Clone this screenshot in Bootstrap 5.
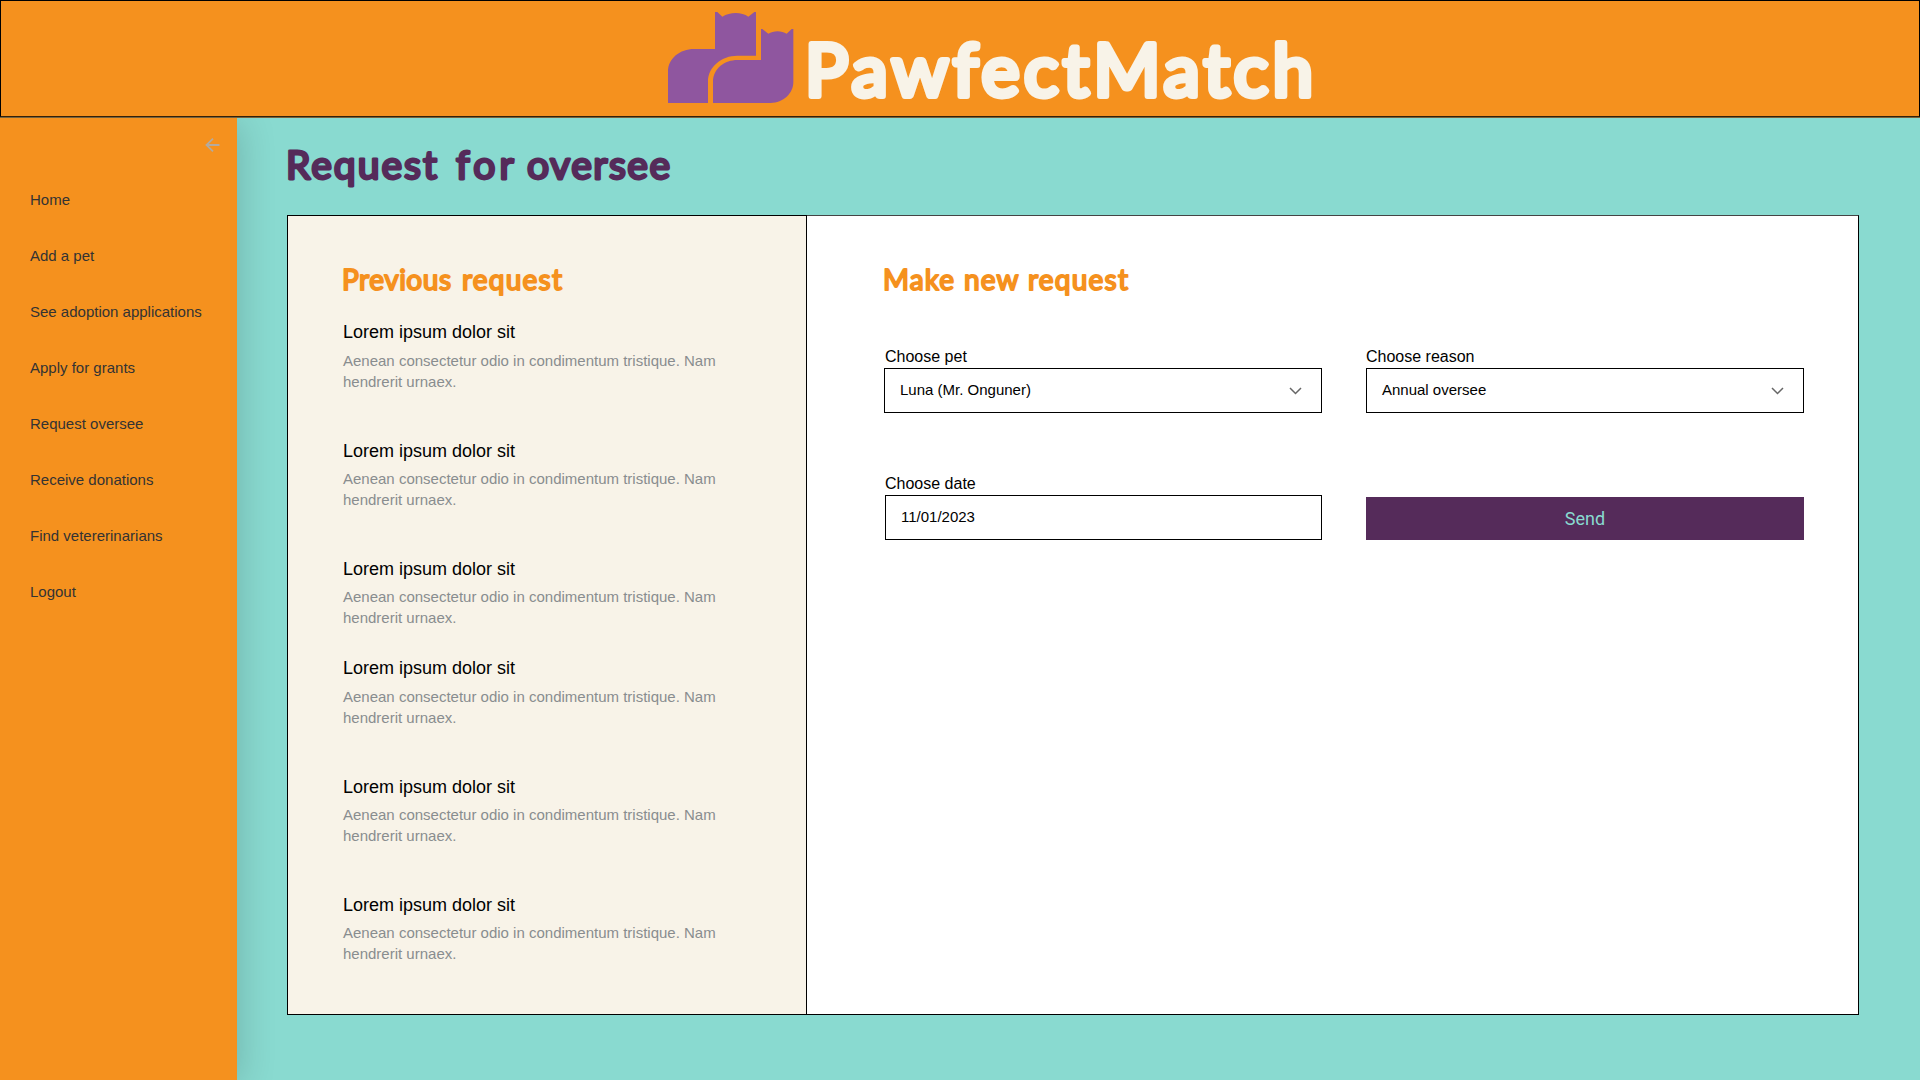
<!DOCTYPE html>
<html lang="en">
<head>
<meta charset="utf-8">
<title>PawfectMatch</title>
<meta name="viewport" content="width=device-width, initial-scale=1">
<link href="https://cdn.jsdelivr.net/npm/bootstrap@5.3.0/dist/css/bootstrap.min.css" rel="stylesheet">
<style>
body{font-family:"Liberation Sans",Arial,sans-serif;background:#fff;color:#000;overflow:hidden}
.page{height:1080px;background:#89dad0}
.topbar{height:117px;background:#f5911e;border:1px solid #000;border-bottom-color:#32200a;box-shadow:0 1px #77633c;margin-bottom:1px;z-index:2;padding-left:667px}
.cats{width:126px;height:92px;margin-top:10px;flex:none}
.hand{line-height:1;margin:0}
.hand svg{display:block;overflow:visible;font-family:Lato,sans-serif;font-weight:400;stroke-linejoin:round;stroke-linecap:round}
.brand svg{font-size:72px;fill:#f8f3e8;stroke:#f8f3e8;stroke-width:6px}
.side{width:237px;background:#f5911e;box-shadow:4px 4px 34px rgba(0,0,0,.16);padding:20px 0 0 30px;flex:none}
.side .back{padding-right:17px;height:34px}
.side .nav-link{padding:0;height:56px;line-height:56px;font-size:15px;color:#333}
.main{padding:0 61px 65px 50px}
.title{height:97px}
.title svg{font-size:39px;fill:#552b5a;stroke:#552b5a;stroke-width:2.8px}
.panel{height:800px}
.prev{width:520px;background:#f8f3e8;border:1px solid #000;padding:49px 55px 0;flex:none}
.make{background:#fff;border:1px solid #000;border-top-color:#444;border-left:0;padding:49px 54px 0 77px}
.sub{height:30px}
.sub svg{font-size:28px;fill:#f5911e;stroke:#f5911e;stroke-width:1.9px}
.items{margin-top:26px}
.item{height:118px}
.item.first{height:119px}
.item.tight{height:99px}
.item h3{font-size:18px;line-height:22px;font-weight:400;margin:0 0 6px}
.item.first h3{margin-bottom:7px}
.item p{font-size:15px;line-height:21px;color:#898d8f;margin:0;width:385px}
.fields{display:grid;grid-template-columns:438px 438px;column-gap:44px;row-gap:61px;margin-top:52px}
.fields label{display:block;font-size:16px;line-height:20px;height:21px;padding-left:1px}
.fields .col-b label{padding-left:0}
.fields .form-control{height:45px;border:1px solid #000;border-radius:0;font-size:15px;color:#000;padding:0 19px 0 15px}
.fields .date{width:437px}
.send{height:43px;border-radius:0;background:#552b5a;color:#89dad0;font-family:Roboto,sans-serif;font-size:18px;padding:0;border:0}
</style>
<script src="https://cdn.jsdelivr.net/npm/bootstrap@5.3.0/dist/js/bootstrap.bundle.min.js"></script>
</head>
<body>
<div class="page d-flex flex-column">
  <header class="topbar d-flex align-items-start position-relative">
    <svg class="cats" viewBox="54 33 378 276" fill="#8f569f"><path d="M54 309V215C54 175 90 147 132 147H195V36H202L217 50C240 35 275 35 295 50L313 36H318V167H262C215 167 174 200 174 245V309Z"/><path d="M189 309V245C189 205 225 180 262 180H333V87H337L355 101C370 91 395 91 410 101L425 87H430V247C430 280 400 309 362 309Z"/></svg>
    <h1 class="hand brand"><svg width="525" height="115"><text x="11" y="95" textLength="508">PawfectMatch</text></svg></h1>
  </header>
  <div class="d-flex flex-grow-1">
    <nav class="side d-flex flex-column">
      <div class="back d-flex justify-content-end"><svg width="15" height="14" viewBox="0 0 15 14" fill="none" stroke="#b3aaa0" stroke-width="1.8"><path d="M14.500 7H2M8 .7L1.500 7L8 13.300"/></svg></div>
      <div class="nav flex-column">
        <a class="nav-link" href="#">Home</a>
        <a class="nav-link" href="#">Add a pet</a>
        <a class="nav-link" href="#">See adoption applications</a>
        <a class="nav-link" href="#">Apply for grants</a>
        <a class="nav-link" href="#">Request oversee</a>
        <a class="nav-link" href="#">Receive donations</a>
        <a class="nav-link" href="#">Find vetererinarians</a>
        <a class="nav-link" href="#">Logout</a>
      </div>
    </nav>
    <main class="main flex-grow-1">
      <h2 class="hand title"><svg width="400" height="90"><text y="61"><tspan x="-1" textLength="151">Request</tspan> <tspan x="169" textLength="57">for</tspan> <tspan x="240" textLength="143">oversee</tspan></text></svg></h2>
      <div class="panel d-flex position-relative">
        <section class="prev">
          <h2 class="hand sub"><svg width="240" height="30"><text y="24.500"><tspan x="-1" textLength="109">Previous</tspan> <tspan x="119" textLength="100">request</tspan></text></svg></h2>
          <div class="items">
            <article class="item first"><h3>Lorem ipsum dolor sit</h3><p>Aenean consectetur odio in condimentum tristique. Nam hendrerit urnaex.</p></article>
            <article class="item"><h3>Lorem ipsum dolor sit</h3><p>Aenean consectetur odio in condimentum tristique. Nam hendrerit urnaex.</p></article>
            <article class="item tight"><h3>Lorem ipsum dolor sit</h3><p>Aenean consectetur odio in condimentum tristique. Nam hendrerit urnaex.</p></article>
            <article class="item first"><h3>Lorem ipsum dolor sit</h3><p>Aenean consectetur odio in condimentum tristique. Nam hendrerit urnaex.</p></article>
            <article class="item"><h3>Lorem ipsum dolor sit</h3><p>Aenean consectetur odio in condimentum tristique. Nam hendrerit urnaex.</p></article>
            <article class="item"><h3>Lorem ipsum dolor sit</h3><p>Aenean consectetur odio in condimentum tristique. Nam hendrerit urnaex.</p></article>
          </div>
        </section>
        <section class="make flex-grow-1">
          <h2 class="hand sub"><svg width="260" height="30"><text y="24.500"><tspan x="-1" textLength="71">Make</tspan> <tspan x="80" textLength="54">new</tspan> <tspan x="144" textLength="100">request</tspan></text></svg></h2>
          <form class="fields">
            <div><label>Choose pet</label><div class="form-control d-flex align-items-center justify-content-between"><span>Luna (Mr. Onguner)</span><svg width="13" height="8" viewBox="0 0 13 8" fill="none" stroke="#666" stroke-width="1.500"><path d="M1 1L6.500 6.500L12 1"/></svg></div></div>
            <div class="col-b"><label>Choose reason</label><div class="form-control d-flex align-items-center justify-content-between"><span>Annual oversee</span><svg width="13" height="8" viewBox="0 0 13 8" fill="none" stroke="#666" stroke-width="1.500"><path d="M1 1L6.500 6.500L12 1"/></svg></div></div>
            <div><label>Choose date</label><div class="form-control date d-flex align-items-center ms-auto"><span>11/01/2023</span></div></div>
            <div class="d-flex align-items-end"><button type="button" class="btn send w-100">Send</button></div>
          </form>
        </section>
      </div>
    </main>
  </div>
</div>
</body>
</html>
